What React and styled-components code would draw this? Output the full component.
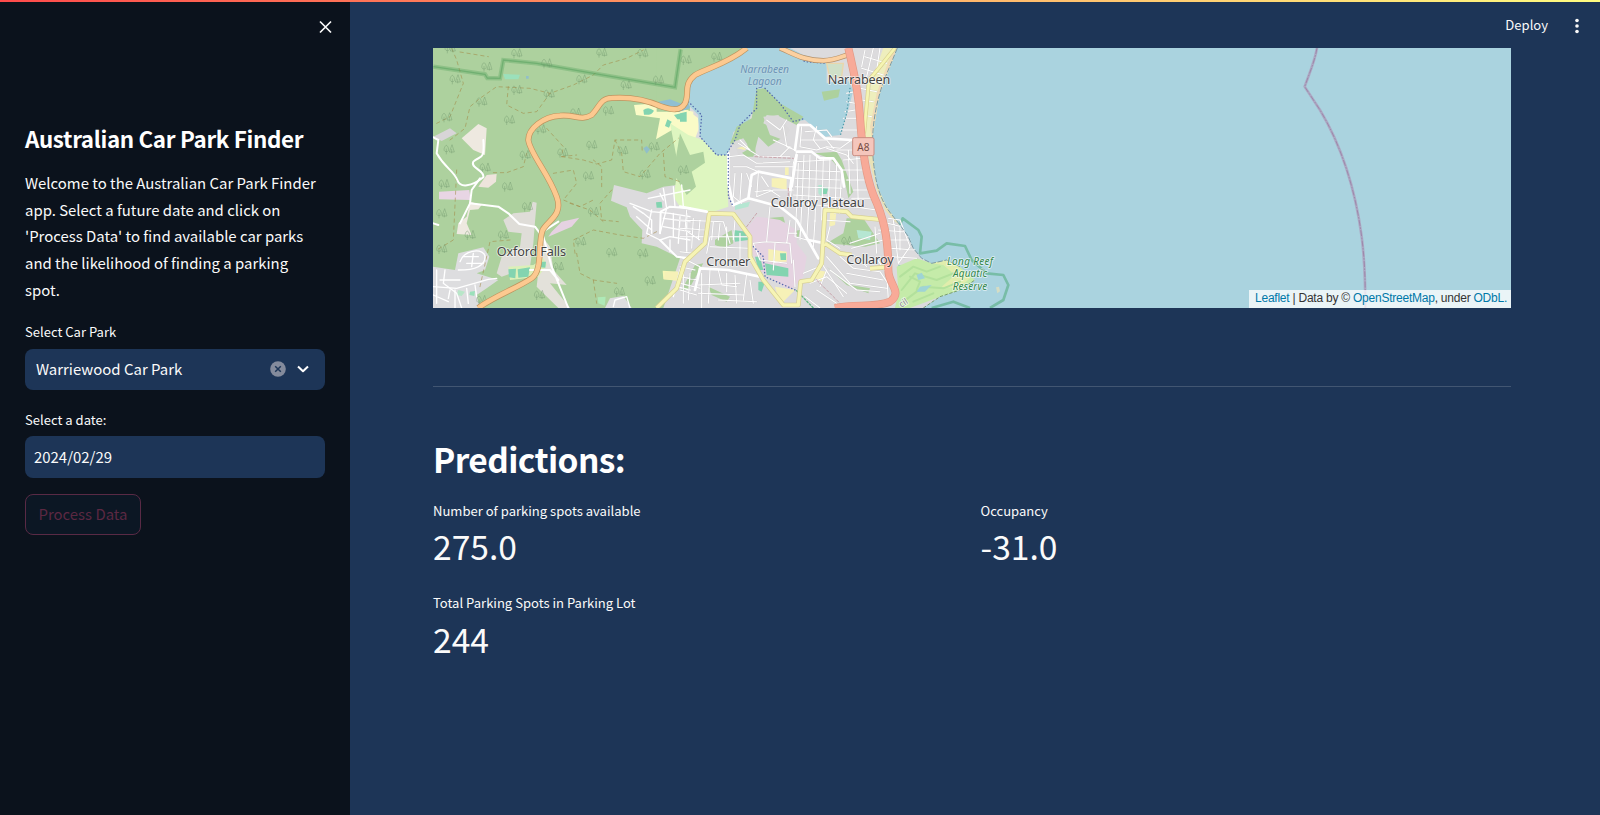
import React from "react";
import styled, { createGlobalStyle } from "styled-components";

const GlobalStyle = createGlobalStyle`
  * { box-sizing: border-box; }
  html, body { margin: 0; height: 100%; background: #1d3557; overflow: hidden; }
  body { font-family: "Noto Sans CJK SC", "Noto Sans", sans-serif; color: #fafafa; }
`;

const Page = styled.div`
  position: relative;
  display: flex;
  height: 815px;
`;

const Decoration = styled.div`
  position: absolute;
  inset: 0 0 auto 0;
  height: 2.4px;
  z-index: 2;
  background: linear-gradient(90deg, #ff4b4b, #fffd80);
`;

const Sidebar = styled.aside`
  width: 350px;
  flex: none;
  display: flex;
  flex-direction: column;
  align-items: stretch;
  padding: 17px 25px 0;
  background: #0b121c;
`;

const CloseButton = styled.button`
  align-self: flex-end;
  display: flex;
  width: 20px;
  height: 20px;
  margin: 0 -10px 86px 0;
  padding: 0;
  border: 0;
  background: none;
  color: #fafafa;
`;

const SidebarTitle = styled.h1`
  margin: 0 0 17px;
  font-size: 22.4px;
  line-height: 30px;
  font-weight: 700;
  letter-spacing: -0.35px;
  white-space: nowrap;
  color: #fff;
`;

const Intro = styled.p`
  margin: 0 0 17.5px;
  font-size: 14.92px;
  line-height: 26.67px;
`;

const Label = styled.div`
  font-size: 13.06px;
  line-height: 22px;
  white-space: nowrap;
`;

const Field = styled.div`
  display: flex;
  align-items: center;
  height: 41.5px;
  margin: ${(p) => p.$gap};
  padding: 0 16px ${(p) => p.$lift || 0} ${(p) => p.$inset};
  border-radius: 8px;
  background: #1d3557;
  font-size: 14.95px;
`;

const FieldText = styled.span`
  flex: 1;
  line-height: 26px;
  white-space: nowrap;
`;

const ClearIcon = styled.svg`
  width: 16px;
  height: 16px;
  margin-right: 11px;
`;

const ProcessButton = styled.button`
  align-self: flex-start;
  width: 116px;
  height: 41px;
  padding: 0;
  border: 1px solid #592a45;
  border-radius: 8px;
  background: #0c1724;
  color: #5b2842;
  font-family: inherit;
  font-size: 14.92px;
  line-height: 26px;
`;

const Main = styled.main`
  flex: 1;
  display: flex;
  flex-direction: column;
  min-width: 0;
`;

const Header = styled.header`
  display: flex;
  justify-content: flex-end;
  align-items: center;
  height: 48px;
  padding: 3px 17px 0 0;
  font-size: 13.05px;
`;

const Deploy = styled.span`
  line-height: 22px;
  padding-bottom: 2px;
`;

const MenuDots = styled.svg`
  width: 12px;
  height: 20px;
  margin-left: 23px;
`;

const Content = styled.section`
  padding: 0 89px 0 83px;
`;

const MapFrame = styled.div`
  display: grid;
  height: 260px;
  background: #aad3df;
  > * { grid-area: 1 / 1; }
`;

const MapSvg = styled.svg`
  display: block;
  width: 1078px;
  height: 260px;
`;

const Attribution = styled.div`
  place-self: end;
  height: 18px;
  width: 262px;
  padding-left: 6px;
  background: rgba(255, 255, 255, 0.75);
  color: #333;
  font: 12px/17px "Liberation Sans", Arial, sans-serif;
  letter-spacing: -0.235px;
  white-space: nowrap;
`;

const MapLink = styled.a`
  color: #0078a8;
`;

const Divider = styled.hr`
  height: 1px;
  margin: 78px 0 49px;
  border: 0;
  background: #425672;
`;

const Heading = styled.h2`
  margin: 0 0 18.5px;
  font-size: 33.5px;
  line-height: 45px;
  font-weight: 700;
  letter-spacing: -0.6px;
  color: #fff;
`;

const Metrics = styled.div`
  display: grid;
  grid-template-columns: 1fr 1fr;
  column-gap: 17px;
  row-gap: 21px;
`;

const MetricValue = styled.div`
  margin-top: -0.5px;
  font-size: 33.6px;
  line-height: 50px;
`;

function Metric({ label, value }) {
  return (
    <div>
      <Label>{label}</Label>
      <MetricValue>{value}</MetricValue>
    </div>
  );
}

const TREES = [
  [60, 25], [260, 40], [170, 80], [350, 70], [515, 38], [638, 40], [75, 118], [260, 150], [455, 118],
  [588, 135], [685, 120], [155, 185], [357, 162], [50, 232], [238, 240], [437, 218], [535, 212],
  [332, 268], [57, 328], [285, 345], [398, 338], [485, 315], [578, 332], [672, 320], [165, 383],
  [475, 408], [645, 403], [760, 390], [42, 432], [232, 440], [35, 520], [490, 515], [292, 500],
  [220, 585], [452, 605], [35, 627], [545, 637], [638, 640], [120, 585], [385, 680], [568, 755],
  [660, 722], [328, 765], [155, 780], [768, 60], [860, 50], [1250, 603],
];

const COAST =
  "M652 24C632 75 610 120 598 165C580 230 572 300 582 380C590 445 605 485 632 520L660 555L684 588L700 625L725 655L755 670L800 660L840 680L885 720L840 750L780 770L730 804";

const WEST_TRACKS = [
  "M90 36L175 50", "M20 250L60 230L100 130L80 60L65 25", "M60 300L105 265L120 200L150 175L200 140L300 145L360 160L430 135L490 105L520 75L590 55L640 30",
  "M360 160L320 215L280 220L230 195L235 140", "M350 265L400 320L395 350L460 360L500 372L545 360L555 300L635 300L637 340",
  "M555 300L575 340L580 395L630 410L690 340L745 295", "M395 350L440 345", "M190 398L230 398L280 380L290 340",
  "M370 400L430 390L440 430L400 480L450 500L490 480", "M545 450L510 490L515 540L565 545", "M420 490L480 510L520 545",
  "M435 640L430 600L490 570L570 585L640 595L680 575", "M440 640L450 700L490 720L560 730", "M80 390L70 600L20 630",
  "M700 340L705 410L750 425", "M490 720L500 790", "M150 740L180 605L240 600", "M515 440L515 380L490 360",
];

const WEST_STREETS = [
  "M10 740L80 745L175 718L200 715", "M90 665C105 625 165 625 165 650S140 690 85 690", "M45 690L40 730L80 760L95 804",
  "M10 765L55 785M60 750L55 775M110 745L115 790M135 735L140 770M20 690L20 790M30 720L90 720M100 650L145 650M110 670L160 670M75 750L75 804M130 640L125 680",
  "M600 490L665 515L720 520L780 530M655 475L780 450M620 530L665 570M610 500L640 520M665 510L650 580L690 600L720 590L780 600",
  "M700 445L710 505L690 580M730 440L735 500M755 435L760 500M690 460L700 480M770 520L770 635M730 520L730 590M750 530L745 610M640 520L665 540L665 580M700 535L780 545M700 560L780 575M720 600L720 635",
  "M550 800L555 780L590 770L600 804M750 690L730 770M740 740L780 750M750 710L780 715",
];

const EAST_STREETS = [
  "M145 350L190 345L230 370L330 365M160 380L200 380L235 395M165 400L160 470L185 490M185 400L180 480M200 400L215 440M225 380L340 380M245 350L330 350M225 455L270 450L300 470M235 400L230 470L280 450L340 450M245 410L265 440",
  "M350 335L340 370L335 440L330 480M355 370L350 500M372 345L365 505M390 345L385 520M410 350L405 545M430 355L425 540M450 355L445 515M470 370L465 520M485 400L478 520",
  "M345 390L480 395M345 415L480 420M345 440L485 445M340 465L490 475M340 490L480 500M345 365L450 360",
  "M365 260L360 320L410 330L440 320L480 325L515 300M375 275L440 270L455 290M365 300L440 300L460 325M410 260L400 300L420 325M440 325L500 345L520 370",
  "M495 215L525 210M500 185L525 190M500 160L525 155M490 235L530 235M480 270L530 270M470 330L545 330M490 360L550 355M490 390L555 390M500 420L560 420M520 450L570 450M515 475L575 475M520 500L590 510M505 330L510 460M530 330L535 500",
  "M555 30L545 80M580 24L560 110M600 24L590 90M555 50L620 70M545 85L610 105M545 115L600 130M540 145L590 155M545 180L580 185M550 225L575 230",
  "M625 535L660 540L690 620L655 670M605 545L665 560M595 570L670 575M610 600L690 600M630 625L705 630M635 650L710 655M640 540L655 670M660 560L660 630M585 560L590 640",
  "M350 500L345 590L400 605M365 505L360 600M385 520L380 600M405 540L400 620M430 540L510 545M450 560L440 600L480 625M480 650L520 685L600 695L630 740M440 650L510 730L620 745M425 670L490 770M500 700L610 720M450 690L530 750L600 755M590 655L620 700L625 780M515 625L610 600M510 610L600 580M530 650L560 680",
  "M0 540L130 545L150 610M20 510L15 570L60 600M40 535L35 625M60 540L55 600M100 545L95 600M120 550L115 600M0 565L80 570M0 590L70 590M80 640L90 590L205 590M90 620L205 625M140 560L140 670M165 540L160 600M180 580L180 670",
  "M0 650L60 680M0 680L45 690M65 700L65 804M90 690L85 790M115 690L125 735L170 740M140 700L140 755M165 705L170 790M0 750L50 765M55 735L180 730M55 760L190 765M115 780L230 785M200 700L190 780M210 720L220 790M10 700L10 790M30 700L25 780M0 710L55 720M0 730L60 745M0 635L40 640",
  "M370 700L430 675M390 730L440 710L500 760M410 750L470 790M375 770L420 804M440 690L420 740",
  "M270 500L260 605L220 610M260 605L330 610L335 670M330 540L320 610M350 580L325 580M285 610L280 690M340 660L345 740M220 610L240 660L320 670",
  "M330 320L300 350M335 325L280 300M310 260L320 320L345 330M260 240L300 270L320 240M180 300L210 330M175 310L240 350",
];

function Lines({ paths, ...rest }) {
  return (
    <g fill="none" strokeLinejoin="round" strokeLinecap="round" {...rest}>
      {paths.map((d) => <path key={d} d={d} />)}
    </g>
  );
}

function Road({ d, casing, fill, width }) {
  return (
    <g fill="none" strokeLinejoin="round">
      <path d={d} stroke={casing} strokeWidth={width + 4} />
      <path d={d} stroke={fill} strokeWidth={width} />
    </g>
  );
}

const PlaceName = styled.text`
  font-family: "Noto Sans", sans-serif;
  font-size: ${(p) => p.$size || 38}px;
  font-style: ${(p) => (p.$italic ? "italic" : "normal")};
  fill: ${(p) => p.$color || "#444"};
  stroke: ${(p) => p.$halo || "rgba(255,255,255,0.65)"};
  stroke-width: 5px;
  stroke-linejoin: round;
  paint-order: stroke;
  text-anchor: middle;
`;

/* Three drawing units make one screen pixel; "west" shifts the inland half by 750 units. */
function CoastMap() {
  const west = "translate(-750 0)";
  return (
    <MapSvg viewBox="-741 24 3234 780" preserveAspectRatio="none">
      <rect x="-741" y="24" width="3234" height="780" fill="#aad3df" />
      <path d={`M-741 24L${COAST.slice(1)}L-741 804Z`} fill="#dcdbdd" />

      <g transform={west}>
        <path d="M9 24H780V430L700 440L650 460L552 435L543 482L590 502L600 530L637 570L635 610L680 620L750 655L735 700L700 804H9Z" fill="#add19e" />
        <path d="M85 640L160 622L178 650L165 690L140 700L205 720L170 745L140 765L150 804H9V680L75 690Z" fill="#dddddf" />
        <path d="M525 804L540 775L580 768L605 804Z" fill="#dddddf" />
        <path d="M95 295L145 252L170 265L165 345L130 330Z" fill="#eee9e0" />
        <path d="M10 290L60 265L80 280L35 303Z" fill="#d8d5d8" />
        <path d="M27 455L118 450L122 480L27 478Z" fill="#e8d5e4" />
        <path d="M145 440L170 405L200 402L198 425L175 443Z" fill="#eee4dc" />
        <path d="M120 485L155 495L145 508L120 510L110 550L125 585L80 582L85 550L110 530Z" fill="#eee9e0" />
        <path d="M250 520L300 515L308 485L320 488L315 545L310 610L300 680L215 710L200 700L215 650L270 620L275 580L235 575L220 540Z" fill="#dfddd8" />
        <path d="M365 575L395 545L448 533L425 560L355 590Z" fill="#e6d2e2" />
        <path d="M340 595L360 620L370 690L410 735L360 730L420 804H385L320 740L330 650Z" fill="#e3e1da" />
        <path d="M235 680L310 675L340 655L350 675L325 710L240 720Z" fill="#dcf0b8" />
        <path d="M263 688L300 682L295 710L265 713ZM235 688L258 686L256 715L237 712ZM335 665L348 665L346 683L330 682Z" fill="#83d4b0" />
        <path d="M220 102L270 104L265 118L225 118ZM120 755L135 753L133 768L118 765Z" fill="#9be0bb" />
        <path d="M612 195L680 190L790 215V285L735 265L678 298L690 235L618 225Z" fill="#fafbc7" />
        <path d="M640 210Q655 198 672 212Q665 227 642 224ZM712 238L725 245L717 263L705 258ZM732 225L770 215L771 240L742 238Z" fill="#83d4b0" />
        <path d="M640 325L650 318L660 328L650 341ZM288 108h8v8h-8Z" fill="#91bfc9" />
        <path d="M772 460V510L760 490Z" fill="#c8eba4" />
        <path d="M678 487L695 485L697 503L680 503Z" fill="#83d4b0" />
        <path d="M698 692L745 695L740 722L700 718Z" fill="#f8f6b5" />
        <path d="M503 772L527 770L524 797L505 790Z" fill="#aee9b7" />
        <path d="M85 750L105 755L95 768L80 765Z" fill="#b8e6c8" />
      </g>

      {/* Lagoon and surrounding reserves */}
      <path d="M-70 24H200L140 65L30 110L22 200L0 215H-70Z" fill="#add19e" />
      <path d="M200 24H500L470 60L420 60L330 36L365 60L440 65L440 130L500 115L520 150L505 210L480 285L435 290L375 240L340 245L315 205L245 145L205 245L160 275L140 340L110 345L60 290L55 225L25 195V130L60 105L140 70Z" fill="#aad3df" />
      <path d="M330 24H500L490 52L430 62L370 45Z" fill="#dcdbdd" />
      <path d="M-65 185L-30 178L0 190L25 185L30 205L0 215L-45 205Z" fill="#91bfd2" />
      <path d="M0 215L22 210L55 235V270L40 310L30 330H0Z" fill="#fafbc7" />
      <path d="M-30 250L25 285L70 300L140 345L145 500L95 517L0 500L-20 470L-5 380Z" fill="#def6c0" />
      <path d="M0 280L30 345L70 335L75 368L35 395L48 440L20 465L-20 400Z" fill="#add19e" />
      <path d="M55 235L60 290L110 345L145 345L160 275L205 245L220 160L100 190Z" fill="#aad3df" />
      <path d="M230 145L255 145L300 190L370 230L350 255L300 230L260 225L250 250L320 285L265 320L235 290L220 350L195 350L170 315L150 310L170 260L215 235Z" fill="#add19e" />
      <path d="M250 230L295 225L330 270L310 300L270 285ZM160 305L190 295L210 325L175 345Z" fill="#dad9da" />
      <path d="M425 155L480 148L475 172L432 182ZM405 340L470 335L485 360L520 455L505 475L490 400L450 355ZM500 535L550 535L600 610L555 620L440 610L490 580ZM105 600L155 570L160 610L130 625L105 615Z" fill="#add19e" />
      <path d="M440 680L510 735L570 745L565 760L500 735ZM85 740L150 770L140 785L95 765ZM45 675L70 670L25 750L5 750ZM255 535L310 530L315 548L270 545ZM330 575L360 570L355 595ZM200 290L220 285L228 345L205 340Z" fill="#add19e" />
      <path d="M440 70L490 70L485 110L450 115Z" fill="#cfe0c8" stroke="#ead6aa" strokeWidth="4" />
      <path d="M610 24H652L598 165L576 300L548 290L575 120Z" fill="#eeeebd" />
      <path d="M640 24H652L598 165L576 300L570 260L590 160Z" fill="#f0dbb7" />
      <path d="M576 300L560 330L590 450L615 510L645 545L660 555L620 500L588 430Z" fill="#e9e2b6" />
      <path d="M230 530L270 535L300 540L350 570L350 610L380 650L370 710L330 752L240 690L210 620L200 565Z" fill="#e5d3e1" />
      <path d="M265 627L320 635L320 665L265 665ZM275 415L320 415L320 450L275 440ZM315 380H326V405H315ZM450 520L470 510L465 555L448 560ZM185 320L205 318L195 330L170 325ZM410 690L440 695L425 725L405 715ZM285 740L345 750L300 795ZM-45 695L-5 695L-12 720L-48 718Z" fill="#f6f1b7" />
      <path d="M160 570L200 575L205 600L165 605ZM300 640H318V660H302ZM255 670L325 685L325 710L260 705ZM225 650L240 650L250 690L235 690ZM235 725L255 725L245 755L235 750ZM425 440L445 442L440 462H425ZM655 675H675V695H655ZM0 220L20 215L20 245L0 245Z" fill="#83d4b0" />
      <path d="M530 570L575 575L570 600L535 595ZM165 495L210 485L205 500L165 510ZM415 435L428 435L424 470L415 460Z" fill="#b5e6d2" />
      <path d="M650 680L710 655L755 670L800 660L840 680L885 720L840 750L780 770L690 804H645L655 755Z" fill="#c5eba9" />
      <path d="M755 670L800 660L835 680L870 715L835 745L785 740L825 705L790 675Z" fill="#e1edac" />
      <Lines paths={["M660 710L700 680L740 695L780 680", "M665 750L705 700L770 720L820 700", "M670 785L730 740L790 745L840 725", "M700 785L760 760M690 710L720 725L710 750"]} stroke="#b3e19c" strokeWidth="6" />
      <path d="M710 705L725 698L735 715L715 720ZM720 740L755 735L735 755L710 755Z" fill="#9fd4d5" />

      <Lines transform={west} paths={WEST_TRACKS} stroke="#a28743" strokeOpacity=".55" strokeWidth="3" strokeDasharray="10 11" />
      <g transform={west}>
        <path d="M10 80L165 103L172 114L210 115L220 60L320 70L490 100L735 142L752 28" fill="none" stroke="#56a35b" strokeOpacity=".35" strokeWidth="13" />
        <path d="M10 80L165 103L172 114L210 115L220 60L320 70L490 100L735 142L752 28" fill="none" stroke="#439650" strokeOpacity=".4" strokeWidth="4" />
      </g>
      <path d="M660 555L668 535L715 570L725 590L720 640L770 632L800 610L855 618L875 660L920 700L970 705L985 735L970 780L930 804M755 804L820 785L870 804" fill="none" stroke="#70b99e" strokeOpacity=".85" strokeWidth="8" strokeLinejoin="round" />

      <g stroke="#71986f" strokeOpacity=".62" strokeWidth="2" fill="none" transform={west}>
        {TREES.map(([x, y]) => (
          <path key={`${x}-${y}`} transform={`translate(${x} ${y})`} d="M-8 15V-2M-8 7C-21 7-12-12-8-12S5 7-8 7M8 12V-1M1 8L9-14L16 8Z" />
        ))}
      </g>

      <Lines transform={west} paths={WEST_STREETS} stroke="#fff" strokeWidth="4" />
      <Lines paths={EAST_STREETS} stroke="#c5c3c3" strokeWidth="5" strokeOpacity=".5" />
      <Lines paths={EAST_STREETS} stroke="#fff" strokeWidth="3.2" />
      <Lines
        transform={west}
        paths={["M10 292L25 300L20 340C45 385 70 390 82 420C90 445 125 440 160 412C165 390 120 385 130 365C150 345 165 365 160 300", "M150 415L125 450L120 490L205 500L235 520L268 552L315 560L330 580L385 545", "M120 490L90 550", "M340 590L365 680L415 804M300 690L360 690L385 720", "M690 580L692 515L720 500L780 505M690 600L740 650L780 655", "M10 550L25 555"]}
        stroke="#fff" strokeWidth="6"
      />
      <Lines
        paths={["M345 330L355 255L390 255L435 295L515 300", "M350 335L395 335L420 355L460 355L485 390L492 440", "M0 500L80 515M160 495L205 475L215 405L235 395L335 415L330 450", "M205 475L300 500L350 540L415 655", "M145 340L145 430L160 495M350 345L335 440", "M45 750L60 685L145 690L250 712M385 600L435 610"]}
        stroke="#fff" strokeWidth="8"
      />
      <Lines paths={["M230 145L230 205L180 255L165 300L140 340", "M255 145L300 190L340 245L375 235", "M25 185L65 225L60 290L110 345L145 345", "M145 345L145 470L160 500", "M220 620L250 650L255 710L350 752", "M330 36L375 65L440 70"]} stroke="#5368ac" strokeWidth="4" strokeDasharray="1 9" />
      <Lines paths={["M510 145L500 220L480 290"]} stroke="#509baa" strokeWidth="4" strokeDasharray="1 9" />
      <Lines paths={["M225 350L340 355M230 520L200 560M410 720L480 790M325 445L325 490"]} stroke="#b56b79" strokeOpacity=".5" strokeWidth="3" strokeDasharray="8 6" />
      <Lines paths={["M350 752L400 804"]} stroke="#62b882" strokeWidth="4" strokeDasharray="5 6" />

      <Road d="M85 520L160 522L210 590V650L250 720L310 795L355 795L362 725L395 720L425 670L435 510L500 515L515 530L615 540M435 610L480 640L515 645M570 685L635 680M-70 804L-10 745L15 665L75 610L88 520" casing="#d6cf90" fill="#f6f4b5" width={10} />
      <Road d="M645 24L600 80L567 120L552 280" casing="#d9d08f" fill="#f5f5b1" width={8} />
      <path d={COAST.split("L885")[0]} fill="none" stroke="#7b9ba6" strokeWidth="3" strokeDasharray="16 5" />
      <path d="M730 804L780 770L840 750L885 720" fill="none" stroke="#789e70" strokeWidth="3" strokeDasharray="10 5" />

      <Road
        d="M-605 804C-560 770-490 745-445 715C-410 690-428 610-412 570C-395 540-350 525-370 470C-395 400-450 340-455 300C-455 265-410 230-360 227C-315 222-300 245-265 225C-240 200-240 175-205 174C-145 170-100 180-60 198C-25 210 0 215 15 190C30 160 8 135 45 105C80 85 145 70 200 24"
        casing="#bd945f" fill="#fcc990" width={14}
      />
      <Road d="M300 24C340 40 370 62 430 62C460 62 485 50 508 43" casing="#b69169" fill="#fcd0a0" width={12} />
      <Road d="M505 24C520 90 535 145 540 230C545 310 555 400 580 465C610 530 625 590 625 690C625 735 670 755 630 785C580 805 530 790 465 804" casing="#e29a86" fill="#f8aa98" width={20} />

      <rect x="518" y="293" width="64" height="54" rx="5" fill="#f5c6bc" stroke="#c98c80" strokeWidth="3" />
      <PlaceName $size={30} $halo="none" $color="#754c45" x="550" y="332">A8</PlaceName>
      <PlaceName x="-446" y="648" textLength="208">Oxford Falls</PlaceName>
      <PlaceName x="537" y="132" textLength="188">Narrabeen</PlaceName>
      <PlaceName x="413" y="501" textLength="282">Collaroy Plateau</PlaceName>
      <PlaceName x="145" y="678" textLength="132">Cromer</PlaceName>
      <PlaceName x="570" y="673" textLength="142">Collaroy</PlaceName>
      <PlaceName $size={31} $italic $color="#6c94b7" $halo="#b9d8e1" x="254" y="98" textLength="146">Narrabeen</PlaceName>
      <PlaceName $size={31} $italic $color="#6c94b7" $halo="#b9d8e1" x="254" y="136" textLength="102">Lagoon</PlaceName>
      <PlaceName $size={30} $italic $color="#32884b" x="870" y="674" textLength="138">Long Reef</PlaceName>
      <PlaceName $size={30} $italic $color="#32884b" x="870" y="712" textLength="102">Aquatic</PlaceName>
      <PlaceName $size={30} $italic $color="#32884b" x="870" y="749" textLength="104">Reserve</PlaceName>
      <PlaceName $size={27} $color="#8c8792" transform="translate(675 796) rotate(-32)">cil</PlaceName>
      <path d="M948 742L957 740L960 754L952 760Z" fill="#d6ddc4" />

      <g transform="translate(1680 -120)" fill="none">
        <path d="M231 144C224 185 208 220 194 260L240 330C300 430 345 560 365 710C374 780 376 830 376 924" stroke="#ad93b5" strokeOpacity=".65" strokeWidth="8" />
        <path d="M231 144C224 185 208 220 194 260L240 330C300 430 345 560 365 710C374 780 376 830 376 924" stroke="#95799f" strokeOpacity=".7" strokeWidth="3" strokeDasharray="18 4 5 4" />
      </g>
    </MapSvg>
  );
}

export default function App() {
  return (
    <Page>
      <GlobalStyle />
      <Decoration />
      <Sidebar>
        <CloseButton aria-label="Close sidebar">
          <svg width="20" height="20" viewBox="0 0 20 20" stroke="currentColor" strokeWidth="1.7" fill="none">
            <path d="M5 4.5L16 15.5M16 4.5L5 15.5" />
          </svg>
        </CloseButton>
        <SidebarTitle>Australian Car Park Finder</SidebarTitle>
        <Intro>
          Welcome to the Australian Car Park Finder app. Select a future date and click on 'Process Data' to find
          available car parks and the likelihood of finding a parking spot.
        </Intro>
        <Label>Select Car Park</Label>
        <Field $gap="6px 0 18.5px" $inset="11px" $lift="1.5px">
          <FieldText>Warriewood Car Park</FieldText>
          <ClearIcon viewBox="0 0 16 16">
            <circle cx="8" cy="8" r="7.8" fill="#848b9c" />
            <path d="M5.2 5.2L10.8 10.8M10.8 5.2L5.2 10.8" stroke="#1d3557" strokeWidth="1.5" />
          </ClearIcon>
          <svg width="12" height="10" viewBox="0 0 12 10" fill="none" stroke="#fff" strokeWidth="2">
            <path d="M1 2.5L6 7.3L11 2.5" strokeLinejoin="round" />
          </svg>
        </Field>
        <Label>Select a date:</Label>
        <Field $gap="5.5px 0 16px" $inset="9px">
          <FieldText>2024/02/29</FieldText>
        </Field>
        <ProcessButton disabled>Process Data</ProcessButton>
      </Sidebar>
      <Main>
        <Header>
          <Deploy>Deploy</Deploy>
          <MenuDots viewBox="0 0 12 20" fill="#fafafa">
            <circle cx="6" cy="4.5" r="1.8" />
            <circle cx="6" cy="10" r="1.8" />
            <circle cx="6" cy="15.5" r="1.8" />
          </MenuDots>
        </Header>
        <Content>
          <MapFrame>
            <CoastMap />
            <Attribution>
              <MapLink>Leaflet</MapLink> | Data by © <MapLink>OpenStreetMap</MapLink>, under <MapLink>ODbL.</MapLink>
            </Attribution>
          </MapFrame>
          <Divider />
          <Heading>Predictions:</Heading>
          <Metrics>
            <Metric label="Number of parking spots available" value="275.0" />
            <Metric label="Occupancy" value="-31.0" />
            <Metric label="Total Parking Spots in Parking Lot" value="244" />
          </Metrics>
        </Content>
      </Main>
    </Page>
  );
}
